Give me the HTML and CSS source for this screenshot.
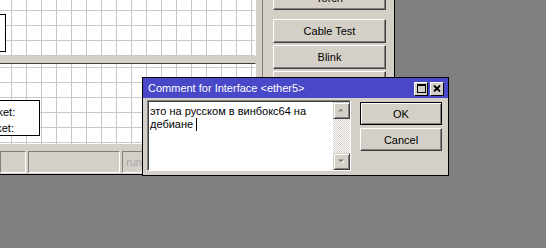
FILE: index.html
```html
<!DOCTYPE html>
<html lang="ru">
<head>
    <meta charset="UTF-8">
    <title>Comment for Interface</title>
    <link rel="stylesheet" href="styles.css">
</head>
<body>
    <div class="winbox">
        <div class="pane">
            <div class="graph graph-top">
                <div class="legend legend-top"></div>
            </div>
            <div class="graph graph-bottom">
                <div class="legend legend-bottom">
                    <div>Rx Packet:</div>
                    <div>Tx Packet:</div>
                </div>
            </div>
            <div class="status">
                <div class="cell cell-a"></div>
                <div class="cell cell-b"></div>
                <div class="cell cell-c">running</div>
            </div>
        </div>
        <div class="side">
            <button class="btn btn-torch">Torch</button>
            <button class="btn">Cable Test</button>
            <button class="btn">Blink</button>
            <!-- label sits under the dialog -->
            <button class="btn" aria-label="Reset Counters"></button>
        </div>
    </div>

    <div class="dialog">
        <div class="titlebar">
            <span class="title">Comment for Interface &lt;ether5&gt;</span>
            <div class="title-btns">
                <span class="tbtn">
                    <svg width="9" height="9" viewBox="0 0 9 9"><rect x="0.5" y="0.5" width="8" height="8" fill="none" stroke="#000"/><rect x="0" y="0" width="9" height="2" fill="#000"/></svg>
                </span>
                <span class="tbtn">
                    <svg width="8" height="7" viewBox="0 0 8 7"><path d="M1 0.5l6 6M7 0.5l-6 6" stroke="#000" stroke-width="1.8"/></svg>
                </span>
            </div>
        </div>
        <div class="dialog-body">
            <div class="memo">
                <div class="memo-text">это на русском в винбокс64 на дебиане <span class="caret"></span></div>
                <div class="scroll">
                    <span class="sbtn">
                        <svg width="7" height="5" viewBox="0 0 7 5"><path d="M1 4h6L4 1z" fill="#fff"/><path d="M0 3.5h6L3 0.5z" fill="#808080"/></svg>
                    </span>
                    <span class="track"></span>
                    <span class="sbtn">
                        <svg width="7" height="5" viewBox="0 0 7 5"><path d="M1 1.5h6L4 4.5z" fill="#fff"/><path d="M0 0.5h6L3 3.5z" fill="#808080"/></svg>
                    </span>
                </div>
            </div>
            <div class="actions">
                <button class="btn btn-default">OK</button>
                <button class="btn">Cancel</button>
            </div>
        </div>
    </div>
</body>
</html>
```

FILE: styles.css
```css
body {
    margin: 0;
    width: 546px;
    height: 248px;
    overflow: hidden;
    position: relative;
    background-color: #808080;
    font-family: "Liberation Sans", Arial, sans-serif;
    font-size: 11px;
    color: #000;
}

/* main winbox window (cut by the viewport) */
.winbox {
    width: 394px;
    height: 174px;
    display: flex;
    background-color: #d4d0c8;
    border-right: 1px solid #000;
    border-bottom: 1px solid #000;
}
.pane {
    width: 262px;
    display: flex;
    flex-direction: column;
}
.graph {
    position: relative;
    width: 255px;
    background-color: #fff;
    border-right: 1px solid #fff;
    background-image:
        linear-gradient(#c8c8c8 1px, transparent 1px),
        linear-gradient(90deg, #c8c8c8 1px, transparent 1px);
    background-size: 15px 15px;
    overflow: hidden;
}
.graph-top {
    height: 56px;
    background-position: 11px 10px;
}
.graph-bottom {
    height: 80px;
    margin-top: 7px;
    border-top: 1px solid #404040;
    background-position: 11px 3px;
}
.legend {
    position: absolute;
    background-color: #fff;
    border: 1px solid #000;
}
.legend-top {
    left: -60px;
    top: 14px;
    width: 64px;
    height: 36px;
}
.legend-bottom {
    left: -52px;
    top: 36px;
    width: 92px;
    height: 36px;
    padding: 3px 0 0 13px;
    box-sizing: border-box;
    line-height: 16px;
}

.status {
    display: flex;
    gap: 2px;
    margin-top: 7px;
    height: 22px;
}
.cell {
    box-sizing: border-box;
    height: 22px;
    border: 1px solid;
    border-color: #808080 #fff #fff #808080;
    padding: 4px 3px 0;
    color: #a8a8a8;
}
.cell-a { width: 26px; }
.cell-b { width: 92px; }
.cell-c { width: 140px; }

.side {
    flex: 1;
    border-left: 1px solid #808080;
    padding: 0 8px 0 10px;
    display: flex;
    flex-direction: column;
    gap: 2px;
}

/* classic raised buttons */
.btn {
    box-sizing: border-box;
    height: 24px;
    font-family: inherit;
    font-size: 11px;
    color: #000;
    background-color: #d4d0c8;
    border: 1px solid;
    border-color: #fff #404040 #404040 #fff;
    box-shadow: inset -1px -1px #808080;
    padding: 0;
}
.side .btn {
    width: 113px;
}
.btn-torch {
    margin-top: -14px;
    margin-bottom: 7px;
}

/* comment dialog */
.dialog {
    position: absolute;
    left: 142px;
    top: 77px;
    width: 307px;
    height: 99px;
    box-sizing: border-box;
    background-color: #d4d0c8;
    border: 1px solid #000;
}
.titlebar {
    height: 20px;
    display: flex;
    align-items: center;
    justify-content: space-between;
    padding: 0 4px 0 5px;
    background-color: #4848c8;
    color: #fff;
}
.title-btns {
    display: flex;
    gap: 2px;
    margin-top: 1px;
}
.tbtn {
    box-sizing: border-box;
    width: 14px;
    height: 14px;
    display: flex;
    align-items: center;
    justify-content: center;
    background-color: #d4d0c8;
    border: 1px solid;
    border-color: #fff #000 #000 #fff;
}
.dialog-body {
    display: flex;
    gap: 9px;
    padding: 2px 5px 0 4px;
}
.memo {
    box-sizing: border-box;
    width: 204px;
    height: 71px;
    display: flex;
    background-color: #fff;
    border: 1px solid;
    border-color: #808080 #fff #fff #808080;
    box-shadow: inset 1px 1px #404040;
    padding: 1px 0 0 1px;
}
.memo-text {
    flex: 1;
    padding: 3px 0 0 1px;
    line-height: 13px;
}
.caret {
    display: inline-block;
    height: 13px;
    border-left: 1px solid #000;
    vertical-align: top;
}
.scroll {
    width: 17px;
    display: flex;
    flex-direction: column;
}
.sbtn {
    box-sizing: border-box;
    height: 17px;
    display: flex;
    align-items: center;
    justify-content: center;
    background-color: #d4d0c8;
    border: 1px solid;
    border-color: #d4d0c8 #404040 #404040 #d4d0c8;
    box-shadow: inset 1px 1px #fff, inset -1px -1px #808080;
}
.track {
    flex: 1;
    background: repeating-conic-gradient(#fff 0 25%, #d4d0c8 0 50%) 0 0 / 2px 2px;
}
.actions {
    display: flex;
    flex-direction: column;
    gap: 3px;
    padding-top: 2px;
}
.actions .btn {
    width: 82px;
    height: 23px;
}
.btn-default {
    border-color: #000;
    box-shadow: inset 1px 1px #fff, inset -1px -1px #808080;
}
```
